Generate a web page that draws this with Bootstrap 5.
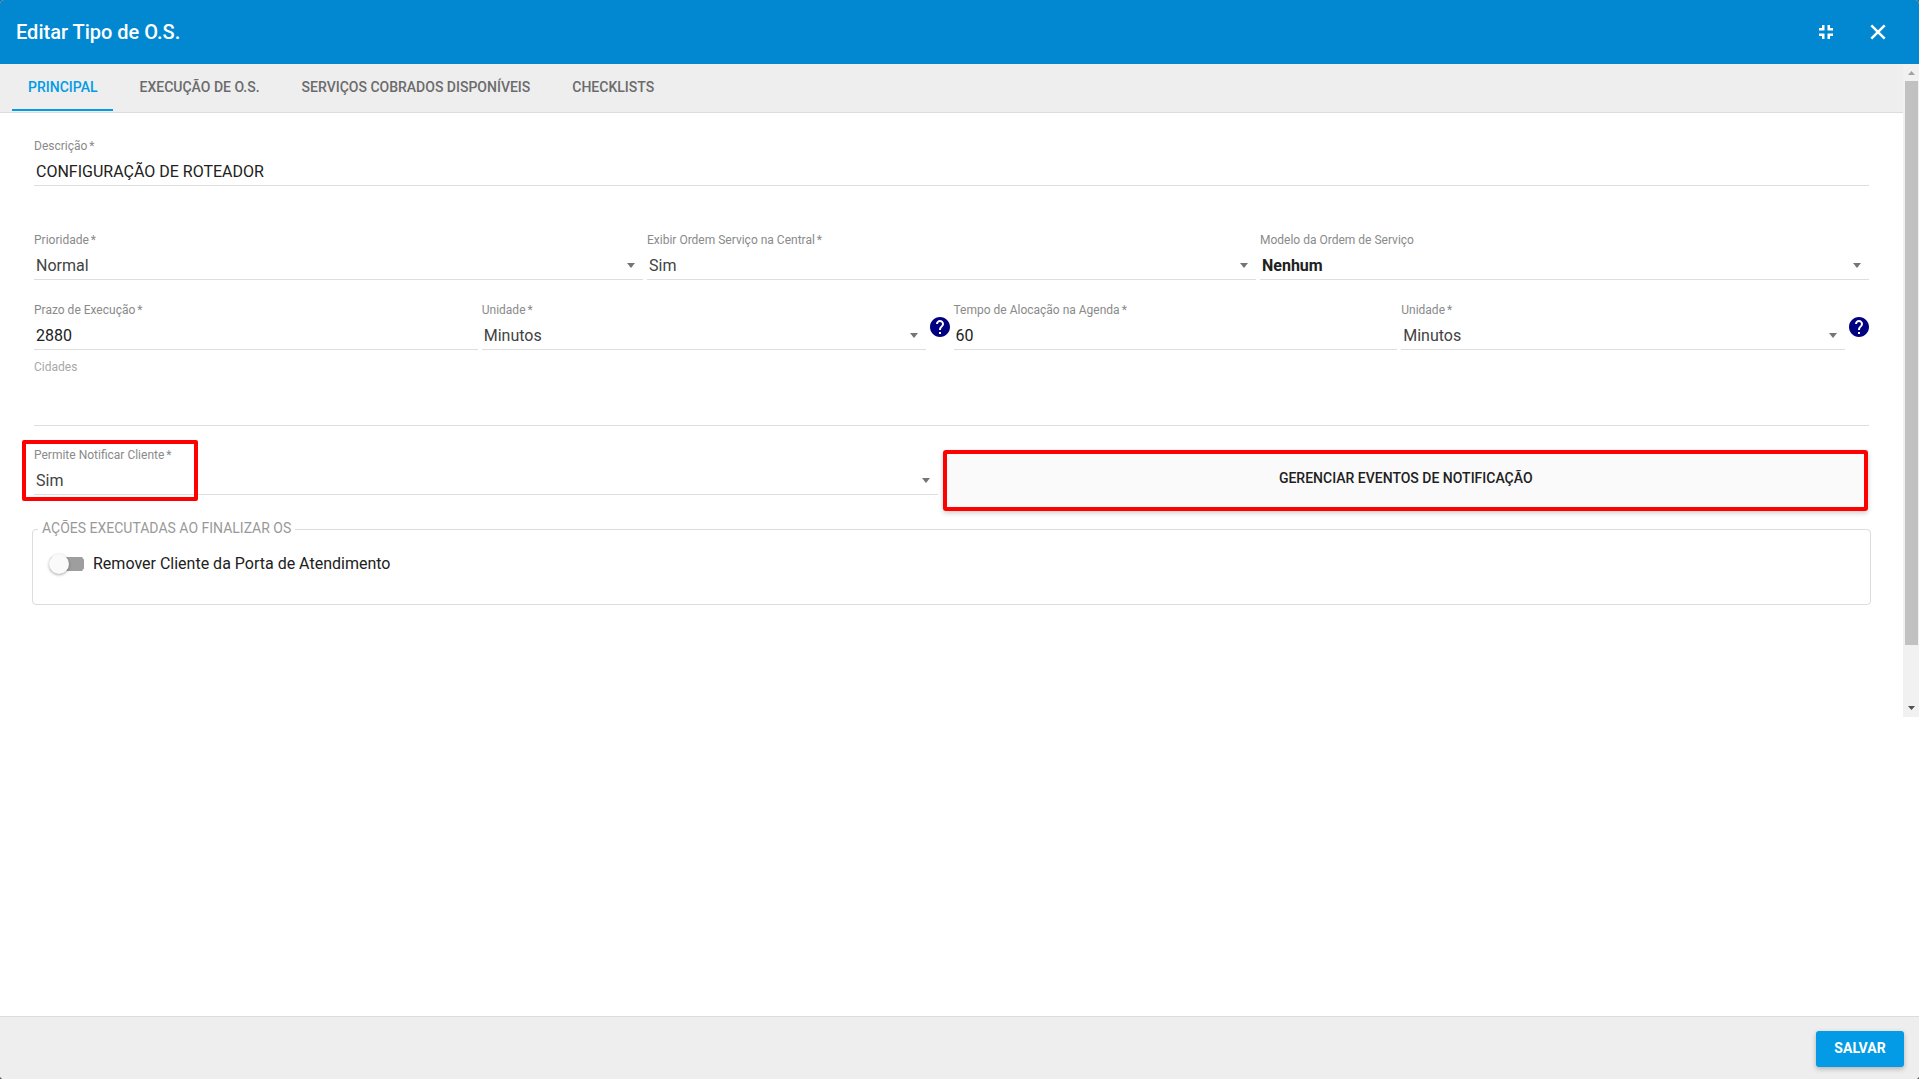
<!DOCTYPE html>
<html lang="pt-BR">
<head>
<meta charset="utf-8">
<meta name="viewport" content="width=device-width, initial-scale=1">
<title>Editar Tipo de O.S.</title>
<link rel="stylesheet" href="https://cdn.jsdelivr.net/npm/bootstrap@5.3.0/dist/css/bootstrap.min.css">
<style>
  body { background: #555; font-family: Roboto, "Liberation Sans", sans-serif; color: #212121; }
  .os-dialog { background: #fff; border-radius: 4px; }
  .os-header { background: #0288d1; height: 64px; padding: 0 29px 0 16px; }
  .os-title { font-size: 20px; line-height: 24px; font-weight: 500; }
  .os-header .btn { color: #fff; line-height: 0; }
  .os-scroll { min-height: 653px; }
  .os-tabs { background: #eee; border-bottom: 1px solid #dcdcdc; height: 49px; padding: 0 12px 1px; gap: 10px; }
  .os-tabs .nav-link { font-size: 14px; line-height: 20px; font-weight: 500; color: #6b6b6b; padding: 13px 16px 11px; border-bottom: 2px solid transparent; border-radius: 0; }
  .os-tabs .nav-link.active { color: #039be5; border-color: #039be5; }
  .os-form { padding: 25px 34px; }
  .os-field { display: flex; flex-direction: column; flex: 1 1 0; min-width: 0; }
  .os-field label { font-size: 12px; line-height: 16px; margin-bottom: 3px; color: #8a8a8a; }
  .os-field label.os-off { color: #a8a8a8; }
  .os-field label span { margin-left: 2px; }
  .os-field .form-control, .os-field .form-select { height: 29px; padding: 1px 24px 0 2px; border: 0; border-bottom: 1px solid #dedede; border-radius: 0; font-size: 16px; line-height: 24px; color: #212121; background-color: transparent; }
  .os-field .form-select { color: #424242; background-image: url("data:image/svg+xml,%3Csvg xmlns='http://www.w3.org/2000/svg' viewBox='0 0 8 5'%3E%3Cpath fill='%23757575' d='M0 0h8L4 5z'/%3E%3C/svg%3E"); background-size: 8px 5px; background-position: right 8px center; }
  .os-field .os-strong { font-weight: 700; color: #212121; }
  .os-field .os-tall { height: 48px; }
  .os-gap-lg { margin-bottom: 46px; }
  .os-gap-md { margin-bottom: 22px; }
  .os-gap-sm { margin-bottom: 9px; }
  .os-cities { margin-bottom: 21px; }
  .os-help { padding: 15px 4px 0; }
  .os-help-end { padding-right: 0; }
  .os-help svg { display: block; }
  .os-notify { display: grid; grid-template-columns: 904fr 925fr; gap: 5px; align-items: start; margin-bottom: 7px; }
  .os-marked { position: relative; }
  .os-marked::before { content: ""; position: absolute; left: -12px; top: -7px; width: 176px; height: 61px; border: 4px solid #f00; border-radius: 2px; pointer-events: none; }
  .os-manage { height: 61px; margin: 3px 1px 0 0; background: #fafafa; border: 4px solid #f00; border-radius: 3px; font-size: 14px; font-weight: 500; color: #212121; padding: 0 0 4px; box-shadow: 0 2px 5px rgba(0,0,0,.2); }
  .os-group { border: 1px solid #dcdcdc; border-radius: 4px; margin: 0 -2px; padding: 12px 16px 28px; }
  .os-group legend { float: none; width: auto; font-size: 14px; line-height: 20px; color: #999; padding: 0 4px 2px; margin: 0 0 0 -11px; }
  .os-switch { gap: 8px; }
  .os-switch label { font-size: 16px; line-height: 24px; }
  .os-toggle { appearance: none; width: 36px; height: 20px; margin: 0; position: relative; background: linear-gradient(#9e9e9e, #9e9e9e) center / 34px 14px no-repeat; border-radius: 10px; }
  .os-toggle::before { content: ""; position: absolute; left: 0; top: 0; width: 20px; height: 20px; border-radius: 50%; background: #fafafa; box-shadow: 0 1px 3px rgba(0,0,0,.35); }
  .os-bar { width: 16px; height: 653px; background: #f1f1f1; padding: 0 1px 0 2px; }
  .os-bar svg { display: block; flex: none; }
  .os-thumb { background: #c1c1c1; flex: 564 1 0; }
  .os-rest { flex: 55 1 0; }
  .os-footer { background: #eee; border-top: 1px solid #dcdcdc; height: 63px; padding: 14px 15px 0; }
  .os-save { background: #039be5; color: #fff; width: 88px; height: 36px; padding: 0 0 2px; font-size: 14px; font-weight: 700; border: 0; border-radius: 3px; box-shadow: 0 2px 5px rgba(0,0,0,.26); }
  .os-save:hover { background: #0288d1; color: #fff; }
</style>
</head>
<body>
<div class="os-dialog d-flex flex-column min-vh-100 overflow-hidden">
  <header class="os-header d-flex align-items-center justify-content-between">
    <h1 class="os-title text-white m-0">Editar Tipo de O.S.</h1>
    <div class="d-flex">
      <button type="button" class="btn border-0 p-0 me-4" aria-label="Sair da tela cheia"><svg width="30" height="24" viewBox="-2 0 30 24" fill="currentColor"><path d="M5 16h3v3h2.500v-5.500H5zM8 8H5v2.500h5.500V5H8zm5.500 11H16v-3h3v-2.500h-5.500zM16 8V5h-2.500v5.500H19V8z"/></svg></button>
      <button type="button" class="btn border-0 p-0" aria-label="Fechar"><svg width="24" height="24" viewBox="0 0 24 24" fill="none" stroke="currentColor" stroke-width="2.500"><path d="M5.300 5.300 18.700 18.700M18.700 5.300 5.300 18.700"/></svg></button>
    </div>
  </header>

  <main class="d-flex flex-grow-1 align-items-start">
    <div class="os-scroll flex-grow-1">
      <nav class="os-tabs nav flex-nowrap">
        <a class="nav-link active" href="#principal" aria-current="page">PRINCIPAL</a>
        <a class="nav-link" href="#execucao">EXECUÇÃO DE O.S.</a>
        <a class="nav-link" href="#servicos">SERVIÇOS COBRADOS DISPONÍVEIS</a>
        <a class="nav-link" href="#checklists">CHECKLISTS</a>
      </nav>

      <form class="os-form" id="principal">
        <div class="os-field os-gap-lg">
          <label for="descricao">Descrição<span>*</span></label>
          <input class="form-control" id="descricao" type="text" value="CONFIGURAÇÃO DE ROTEADOR">
        </div>

        <div class="d-flex gap-1 os-gap-md">
          <div class="os-field">
            <label for="prioridade">Prioridade<span>*</span></label>
            <select class="form-select" id="prioridade"><option>Normal</option></select>
          </div>
          <div class="os-field">
            <label for="exibir">Exibir Ordem Serviço na Central<span>*</span></label>
            <select class="form-select" id="exibir"><option>Sim</option></select>
          </div>
          <div class="os-field">
            <label for="modelo">Modelo da Ordem de Serviço</label>
            <select class="form-select os-strong" id="modelo"><option>Nenhum</option></select>
          </div>
        </div>

        <div class="d-flex os-gap-sm">
          <div class="os-field me-1">
            <label for="prazo">Prazo de Execução<span>*</span></label>
            <input class="form-control" id="prazo" type="text" value="2880">
          </div>
          <div class="os-field">
            <label for="unidade1">Unidade<span>*</span></label>
            <select class="form-select" id="unidade1"><option>Minutos</option></select>
          </div>
          <div class="os-help"><svg width="20" height="20" viewBox="2 2 20 20" fill="#000080" role="img" aria-label="Ajuda"><path d="M12 2C6.480 2 2 6.480 2 12s4.480 10 10 10 10-4.480 10-10S17.520 2 12 2zm1 17h-2v-2h2v2zm2.070-7.750-.9.920C13.450 12.900 13 13.500 13 15h-2v-.5c0-1.100.45-2.100 1.170-2.830l1.240-1.260c.37-.36.59-.86.59-1.410 0-1.100-.9-2-2-2s-2 .9-2 2H8c0-2.210 1.790-4 4-4s4 1.790 4 4c0 .88-.36 1.680-.93 2.250z"/></svg></div>
          <div class="os-field me-1">
            <label for="tempo">Tempo de Alocação na Agenda<span>*</span></label>
            <input class="form-control" id="tempo" type="text" value="60">
          </div>
          <div class="os-field">
            <label for="unidade2">Unidade<span>*</span></label>
            <select class="form-select" id="unidade2"><option>Minutos</option></select>
          </div>
          <div class="os-help os-help-end"><svg width="20" height="20" viewBox="2 2 20 20" fill="#000080" role="img" aria-label="Ajuda"><path d="M12 2C6.480 2 2 6.480 2 12s4.480 10 10 10 10-4.480 10-10S17.520 2 12 2zm1 17h-2v-2h2v2zm2.070-7.750-.9.920C13.450 12.900 13 13.500 13 15h-2v-.5c0-1.100.45-2.100 1.170-2.830l1.240-1.260c.37-.36.59-.86.59-1.410 0-1.100-.9-2-2-2s-2 .9-2 2H8c0-2.210 1.790-4 4-4s4 1.790 4 4c0 .88-.36 1.680-.93 2.250z"/></svg></div>
        </div>

        <div class="os-field os-cities">
          <label class="os-off" for="cidades">Cidades</label>
          <input class="form-control os-tall" id="cidades" type="text">
        </div>

        <div class="os-notify">
          <div class="os-field os-marked">
            <label for="permite">Permite Notificar Cliente<span>*</span></label>
            <select class="form-select" id="permite"><option>Sim</option></select>
          </div>
          <button type="button" class="btn os-manage">GERENCIAR EVENTOS DE NOTIFICAÇÃO</button>
        </div>

        <fieldset class="os-group">
          <legend>AÇÕES EXECUTADAS AO FINALIZAR OS</legend>
          <div class="os-switch d-flex align-items-center">
            <input class="os-toggle" type="checkbox" role="switch" id="remover">
            <label for="remover">Remover Cliente da Porta de Atendimento</label>
          </div>
        </fieldset>
      </form>
    </div>
    <div class="os-bar d-flex flex-column flex-shrink-0" aria-hidden="true">
      <svg width="13" height="17" viewBox="0 0 13 17"><path fill="#a3a3a3" d="M3 11h7L6.500 7z"/></svg>
      <div class="os-thumb"></div>
      <div class="os-rest"></div>
      <svg width="13" height="17" viewBox="0 0 13 17"><path fill="#505050" d="M3 6h7l-3.500 4z"/></svg>
    </div>
  </main>

  <footer class="os-footer d-flex justify-content-end align-items-start">
    <button type="button" class="btn os-save">SALVAR</button>
  </footer>
</div>
<script src="https://cdn.jsdelivr.net/npm/bootstrap@5.3.0/dist/js/bootstrap.bundle.min.js"></script>
</body>
</html>
